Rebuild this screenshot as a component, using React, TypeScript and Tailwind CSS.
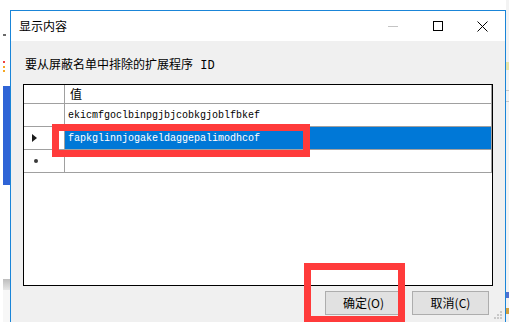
import React from "react";

const cjk = '"Noto Sans CJK SC", "Noto Sans", sans-serif';
const mono = '"Liberation Mono", "Noto Sans CJK SC", monospace';

function TitleButtons() {
  return (
    <div className="ml-auto flex h-full">
      <div className="flex h-full w-[45px] items-center justify-center">
        <div className="h-px w-[10px] bg-[#c4c4c4]" />
      </div>
      <div className="flex h-full w-[45px] items-center justify-center">
        <div className="h-[10px] w-[10px] border border-black" />
      </div>
      <div className="flex h-full w-[45px] items-center justify-center">
        <svg width="11" height="11" viewBox="0 0 11 11">
          <path d="M0.5 0.5L10.5 10.5M10.5 0.5L0.5 10.5" stroke="#000" strokeWidth="1" />
        </svg>
      </div>
    </div>
  );
}

function RowHeader({ mark }: { mark?: "arrow" | "star" }) {
  return (
    <div className="flex w-[41px] shrink-0 items-center border-r border-[#a0a0a0] pl-[8px]">
      {mark === "arrow" ? (
        <svg width="5" height="8" viewBox="0 0 5 8">
          <path d="M0 0L5 4L0 8Z" fill="#1a1a1a" />
        </svg>
      ) : null}
      {mark === "star" ? (
        <div className="ml-[2px] h-[4px] w-[4px] rounded-full bg-[#3a3a3a]" />
      ) : null}
    </div>
  );
}

const rows = [
  { id: "ekicmfgoclbinpgjbjcobkgjoblfbkef", selected: false },
  { id: "fapkglinnjogakeldaggepalimodhcof", selected: true },
];

export default function App() {
  return (
    <div className="relative flex h-[322px] w-[509px] overflow-hidden bg-white" style={{ fontFamily: cjk }}>
      {/* desktop bits left of the dialog */}
      <div className="flex w-[10px] shrink-0 flex-col pl-[3px]">
        <div className="mt-[34px] h-[2px] w-[3px] bg-[#6a6a6a]" />
        <div className="mt-[25px] h-[2px] w-[2px] bg-[#f04040]" />
        <div className="mt-[3px] h-[2px] w-[2px] bg-[#f5a623]" />
        <div className="mt-[2px] h-[2px] w-[2px] bg-[#f5a623]" />
        <div className="mt-[14px] h-[99px] w-[7px] bg-[#2f64d6]" />
        <div className="mt-[94px] h-[11px] w-[7px] bg-gradient-to-b from-[#bdbdbd] to-[#e6e6e6]" />
        <div className="w-[7px] flex-1 bg-[#f7f7f7]" />
      </div>

      {/* dialog */}
      <div className="mt-[10px] flex w-[496px] shrink-0 flex-col border-l border-r border-t border-[#1a85d8]">
        <div className="flex h-[30px] items-center bg-white pl-[8px] text-[12px] text-black">
          <span>显示内容</span>
          <TitleButtons />
        </div>

        <div className="relative flex flex-1 flex-col bg-[#f0f0f0]">
          <div className="mt-[17px] h-[16px] pl-[14px] text-[12px] leading-[16px] text-black" style={{ fontFamily: mono }}>
            要从屏蔽名单中排除的扩展程序 ID
          </div>

          <div className="ml-[12px] mt-[10px] flex h-[202px] w-[470px] flex-col border border-black bg-white">
            <div className="flex h-[19px] border-b border-[#a0a0a0]">
              <RowHeader />
              <div className="flex flex-1 items-center border-r border-[#a0a0a0] pl-[5px] text-[12px] text-black">值</div>
            </div>
            {rows.map((r) => (
              <div key={r.id} className="flex h-[23px] border-b border-[#a0a0a0]">
                <RowHeader mark={r.selected ? "arrow" : undefined} />
                <div
                  className={
                    r.selected
                      ? "flex flex-1 items-center border-r border-[#a0a0a0] bg-[#0078d7] pl-[3px] text-[10px] text-white"
                      : "flex flex-1 items-center border-r border-[#a0a0a0] pl-[3px] text-[10px] text-black"
                  }
                  style={{ fontFamily: mono }}
                >
                  {r.id}
                </div>
              </div>
            ))}
            <div className="flex h-[23px] border-b border-[#a0a0a0]">
              <RowHeader mark="star" />
              <div className="flex-1 border-r border-[#a0a0a0]" />
            </div>
          </div>

          <div className="mt-[5px] flex justify-end gap-[10px] pr-[16px]">
            <button
              type="button"
              className="flex h-[24px] w-[77px] items-center justify-center border border-[#adadad] bg-[#e1e1e1] text-[12px] text-black"
            >
              确定(O)
            </button>
            <button
              type="button"
              className="flex h-[24px] w-[77px] items-center justify-center border border-[#adadad] bg-[#e1e1e1] text-[12px] text-black"
            >
              取消(C)
            </button>
          </div>

          {/* size grip */}
          <svg className="absolute bottom-[2px] right-[2px]" width="9" height="9" viewBox="0 0 9 9">
            <rect x="6" y="0" width="2" height="2" fill="#c8c8c8" />
            <rect x="3" y="3" width="2" height="2" fill="#c8c8c8" />
            <rect x="6" y="3" width="2" height="2" fill="#c8c8c8" />
            <rect x="0" y="6" width="2" height="2" fill="#c8c8c8" />
            <rect x="3" y="6" width="2" height="2" fill="#c8c8c8" />
            <rect x="6" y="6" width="2" height="2" fill="#c8c8c8" />
          </svg>
        </div>
      </div>

      {/* desktop bits right of the dialog */}
      <div className="flex flex-1 flex-col bg-[#f3f3f3]">
        <div className="mt-[62px] h-[8px] bg-[#e8e4a8]" />
        <div className="mt-[20px] h-px bg-[#c8c8c8]" />
        <div className="mt-[10px] h-px bg-[#c8c8c8]" />
        <div className="mt-[190px] h-[6px] bg-[#5070d0]" />
        <div className="mt-[10px] h-[6px] bg-[#d0a040]" />
      </div>

      {/* red annotation boxes */}
      <div className="absolute left-[52px] top-[124px] h-[33px] w-[258px] border-[7px] border-[#ff3b3b]" />
      <div className="absolute left-[304px] top-[263px] h-[60px] w-[101px] border-[7px] border-[#ff3b3b]" />
    </div>
  );
}
